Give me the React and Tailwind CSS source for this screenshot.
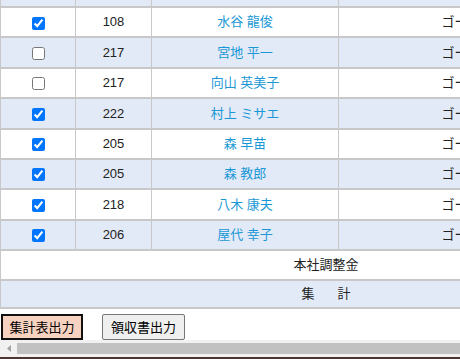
import React from 'react';

const rows = [
  { checked: true, no: '108', name: '水谷 龍俊' },
  { checked: false, no: '217', name: '宮地 平一' },
  { checked: false, no: '217', name: '向山 英美子' },
  { checked: true, no: '222', name: '村上 ミサエ' },
  { checked: true, no: '205', name: '森 早苗' },
  { checked: true, no: '205', name: '森 教郎' },
  { checked: true, no: '218', name: '八木 康夫' },
  { checked: true, no: '206', name: '屋代 幸子' },
];

const cell = 'border-x border-b-2 border-[#c8c8c8] p-0 text-center';

export default function App() {
  return (
    <div
      className="w-[460px] h-[359px] overflow-hidden bg-white flex flex-col text-[13px] text-[#222]"
      style={{ fontFamily: '"Liberation Sans", "Noto Sans CJK JP", sans-serif' }}
    >
      <div className="w-[460px] overflow-hidden shrink-0">
        <table className="w-[652px] table-fixed border-collapse">
          <colgroup>
            <col className="w-[75px]" />
            <col className="w-[76px]" />
            <col className="w-[187px]" />
            <col className="w-[258px]" />
            <col />
          </colgroup>
          <tbody>
            <tr className="h-[7px] bg-[#e3eaf7]">
              <td className={cell} />
              <td className={cell} />
              <td className={cell} />
              <td className={cell} />
              <td className={cell} />
            </tr>
            {rows.map((r, i) => (
              <tr key={i} className={`h-[30.4px] ${i % 2 ? 'bg-[#e3eaf7]' : 'bg-white'}`}>
                <td className={cell}>
                  <input
                    type="checkbox"
                    defaultChecked={r.checked}
                    className="m-0 align-middle w-[13px] h-[13px]"
                  />
                </td>
                <td className={cell}>{r.no}</td>
                <td className={`${cell} text-[#1a98d5]`}>{r.name}</td>
                <td className={cell}>ゴールド</td>
                <td className={cell} />
              </tr>
            ))}
            <tr className="h-[30px] bg-white">
              <td colSpan={5} className={cell}>本社調整金</td>
            </tr>
            <tr className="h-[28px] bg-[#e3eaf7]">
              <td colSpan={5} className={cell}>
                <span className="inline-flex gap-[23px]">
                  <span>集</span>
                  <span>計</span>
                </span>
              </td>
            </tr>
          </tbody>
        </table>
      </div>

      <div className="flex items-start gap-[19px] pt-[5px] pl-[1px] h-[31px] shrink-0">
        <button className="h-[26px] w-[82px] border-2 border-[#111] bg-[#f8d2c0] text-[13px] text-black leading-none">
          集計表出力
        </button>
        <button className="h-[26px] w-[83px] border border-[#767676] rounded-[2px] bg-[#efefef] text-[13px] text-black leading-none">
          領収書出力
        </button>
      </div>

      <div className="flex h-[17px] bg-[#f1f1f1] shrink-0">
        <div className="w-[17px] flex items-center justify-center">
          <svg width="6" height="7" viewBox="0 0 6 7">
            <path d="M5 0 L1 3.5 L5 7 Z" fill="#a3a3a3" />
          </svg>
        </div>
        <div className="flex-1 py-[3px]">
          <div className="h-full bg-[#c1c1c1]" />
        </div>
      </div>
      <div className="h-[2px] bg-[#4d3535] shrink-0" />
    </div>
  );
}
